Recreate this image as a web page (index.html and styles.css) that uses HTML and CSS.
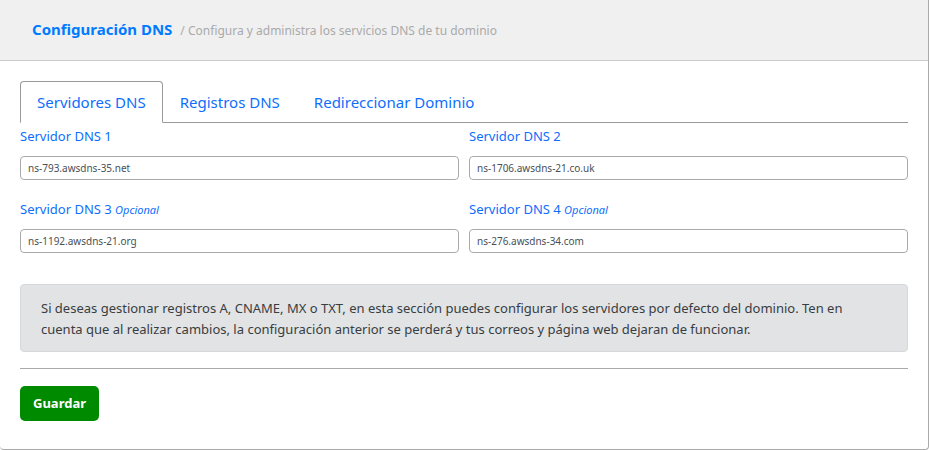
FILE: index.html
```html
<!DOCTYPE html>
<html lang="es">
<head>
<meta charset="utf-8">
<meta name="viewport" content="width=device-width, initial-scale=1">
<title>Configuración DNS</title>
<link rel="stylesheet" href="styles.css">
</head>
<body>
<main class="card">
  <header class="card-header">
    <h1 class="title">Configuración DNS</h1>
    <span class="subtitle">/ Configura y administra los servicios DNS de tu dominio</span>
  </header>
  <div class="card-body">
    <nav class="tabs">
      <a class="tab active" href="#servidores" aria-current="page">Servidores DNS</a>
      <a class="tab" href="#registros">Registros DNS</a>
      <a class="tab" href="#redireccionar">Redireccionar Dominio</a>
    </nav>
    <form id="servidores">
      <div class="fields">
        <div class="field">
          <label for="dns1">Servidor DNS 1</label>
          <input id="dns1" type="text" value="ns-793.awsdns-35.net">
        </div>
        <div class="field">
          <label for="dns2">Servidor DNS 2</label>
          <input id="dns2" type="text" value="ns-1706.awsdns-21.co.uk">
        </div>
        <div class="field">
          <label for="dns3">Servidor DNS 3 <em>Opcional</em></label>
          <input id="dns3" type="text" value="ns-1192.awsdns-21.org">
        </div>
        <div class="field">
          <label for="dns4">Servidor DNS 4 <em>Opcional</em></label>
          <input id="dns4" type="text" value="ns-276.awsdns-34.com">
        </div>
      </div>
      <p class="notice">Si deseas gestionar registros A, CNAME, MX o TXT, en esta sección puedes configurar los servidores por defecto del dominio. Ten en cuenta que al realizar cambios, la configuración anterior se perderá y tus correos y página web dejaran de funcionar.</p>
      <hr>
      <button class="save" type="submit">Guardar</button>
    </form>
  </div>
</main>
</body>
</html>
```
FILE: styles.css
```css
* {
  box-sizing: border-box;
}

body {
  margin: 0;
  background: #fff;
  color: #383d41;
  font-family: "Segoe UI", "Noto Sans", "Open Sans", sans-serif;
  font-size: 13px;
  line-height: 21px;
}

.card {
  border: 1px solid #aaa;
  border-width: 0 1px 1px 0;
  border-radius: 0 0 4px 4px;
}

.card-header {
  display: flex;
  align-items: baseline;
  gap: 8px;
  padding: 17px 32px 19px;
  background: #f0f0f0;
  border-bottom: 1px solid #ccc;
}

.title {
  margin: 0;
  color: #007bff;
  font-size: 15px;
  font-weight: 700;
  line-height: 24px;
}

.subtitle {
  color: #aaa;
  font-size: 12px;
}

.card-body {
  padding: 20px 20px 28px;
}

.tabs {
  display: flex;
  border-bottom: 1px solid #999;
}

.tab {
  margin-bottom: -1px;
  padding: 8px 16px;
  border: 1px solid transparent;
  border-radius: 4px 4px 0 0;
  color: #0d6efd;
  font-size: 15px;
  line-height: 24px;
  text-decoration: none;
}

.tab.active {
  border-color: #999;
  border-bottom-color: #fff;
  background: #fff;
}

.fields {
  display: grid;
  grid-template-columns: 1fr 1fr;
  gap: 19px 10px;
  padding-top: 3px;
}

.field {
  display: flex;
  flex-direction: column;
  gap: 9px;
}

.field label {
  color: #0d6efd;
}

.field em {
  font-size: 11px;
  line-height: 1;
}

.field input {
  width: 100%;
  height: 24px;
  padding: 0 7px 1px;
  border: 1px solid #aaa;
  border-radius: 4px;
  background: #fff;
  color: #495057;
  font-family: inherit;
  font-size: 10px;
}

.notice {
  margin: 31px 0 16px;
  padding: 13px 20px 11px;
  border: 1px solid #d6d8db;
  border-radius: 4px;
  background: #e2e3e5;
}

hr {
  margin: 0 0 17px;
  border: 0;
  border-top: 1px solid #aaa;
}

.save {
  display: block;
  padding: 7px 13px;
  border: 0;
  border-radius: 5px;
  background: #008a00;
  color: #fff;
  font-family: inherit;
  font-size: 13px;
  font-weight: 700;
  line-height: 21px;
}
```
